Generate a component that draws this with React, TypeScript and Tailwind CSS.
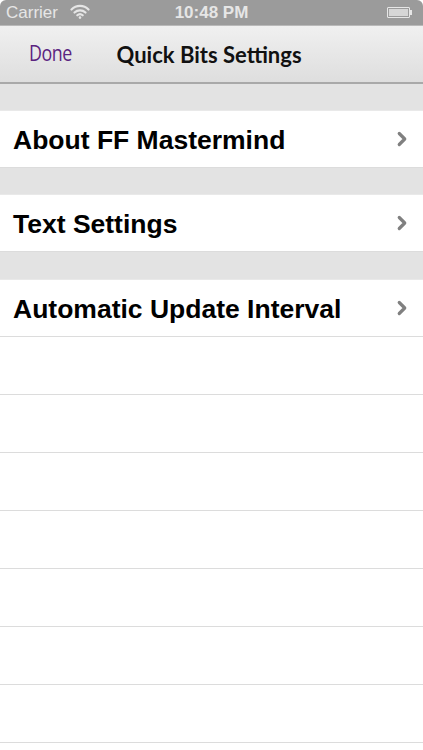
import { ChevronRight } from "lucide-react";

const sections = ["About FF Mastermind", "Text Settings", "Automatic Update Interval"];

function Wifi() {
  return (
    <svg width="20" height="15" viewBox="0 0 20 15" fill="none">
      <path d="M1.5 5.5 A12 12 0 0 1 18.5 5.5" stroke="#e6e6e6" strokeWidth="2.2" strokeLinecap="round" />
      <path d="M4.5 8.5 A8 8 0 0 1 15.5 8.5" stroke="#e6e6e6" strokeWidth="2.2" strokeLinecap="round" />
      <path d="M7.3 11.3 A4 4 0 0 1 12.7 11.3" stroke="#e6e6e6" strokeWidth="2.2" strokeLinecap="round" />
      <circle cx="10" cy="13.6" r="1.3" fill="#e6e6e6" />
    </svg>
  );
}

function Battery() {
  return (
    <div className="flex items-center">
      <div className="w-[23px] h-[11px] border border-[#e6e6e6] p-[1px] rounded-[1px]">
        <div className="w-full h-full bg-[#d6d6d6]" />
      </div>
      <div className="w-[2px] h-[5px] bg-[#e6e6e6]" />
    </div>
  );
}

export default function App() {
  return (
    <div className="w-[423px] h-[750px] overflow-hidden bg-white relative" style={{ fontFamily: "'Liberation Sans', Arial, sans-serif" }}>
      {/* status bar */}
      <div className="h-[26px] bg-[#9b9b9b] rounded-t-[6px] flex items-center px-[6px] relative border-b border-[#b9b9b9]">
        <span className="text-[#e6e6e6] text-[17px] leading-none">Carrier</span>
        <span className="ml-[12px] mt-[-2px]"><Wifi /></span>
        <span className="absolute left-0 right-0 text-center text-[#e6e6e6] text-[17px] font-bold leading-none pointer-events-none">10:48 PM</span>
        <span className="ml-auto mr-[5px]"><Battery /></span>
      </div>

      {/* nav bar */}
      <div className="h-[58px] bg-gradient-to-b from-[#f0f0f0] to-[#dedede] border-b-2 border-[#a9a9a9] flex items-center">
        <span className="ml-[29px] text-[#5a2380] text-[21px] tracking-[-0.5px]" style={{ fontFamily: "'Open Sans', sans-serif", transform: "scaleX(0.85)", transformOrigin: "left" }}>Done</span>
        <span className="ml-[37px] text-[#111] text-[22px] font-bold" style={{ fontFamily: "Lato, sans-serif" }}>Quick Bits Settings</span>
      </div>

      {sections.map((label, i) => (
        <div key={label}>
          <div className={`${i === 2 ? "h-[28px]" : "h-[27px]"} bg-[#e3e3e3] border-b border-[#e9e9e9]`} />
          <div className="h-[57px] bg-white flex items-center border-b border-[#dcdcdc] pl-[13px] pr-[10px]">
            <span className="text-[26.5px] font-bold text-black mt-[3px]">{label}</span>
            <ChevronRight className="ml-auto text-[#808080]" size={22} strokeWidth={3.5} />
          </div>
        </div>
      ))}

      {Array.from({ length: 7 }).map((_, i) => (
        <div key={i} className="h-[58px] border-b border-[#dcdcdc] bg-white" />
      ))}
    </div>
  );
}
